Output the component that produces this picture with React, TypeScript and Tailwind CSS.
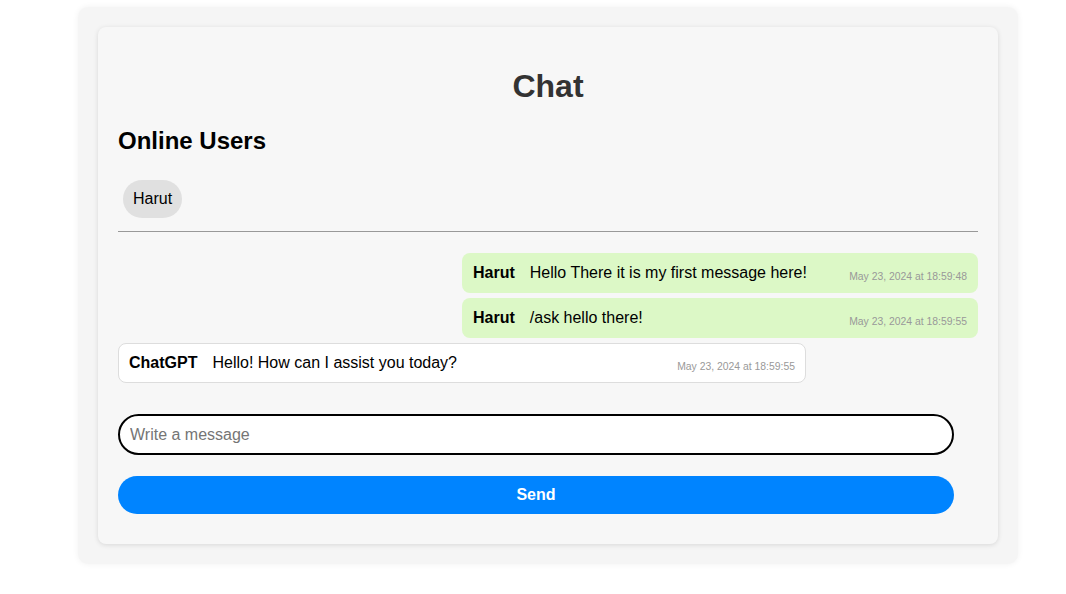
const messages = [
  { user: "Harut", text: "Hello There it is my first message here!", time: "May 23, 2024 at 18:59:48", mine: true },
  { user: "Harut", text: "/ask hello there!", time: "May 23, 2024 at 18:59:55", mine: true },
  { user: "ChatGPT", text: "Hello! How can I assist you today?", time: "May 23, 2024 at 18:59:55", mine: false },
];

function Message({ m }: { m: (typeof messages)[number] }) {
  return (
    <div
      className={
        m.mine
          ? "ml-auto flex w-[60%] items-end rounded-lg bg-[#dcf8c6] px-[11px] py-[10px]"
          : "mr-auto flex w-[80%] items-end rounded-lg border border-[#ddd] bg-white px-[10px] py-[9px]"
      }
    >
      <span className="text-[16px] leading-5 font-bold text-black">{m.user}</span>
      <span className="ml-[15px] text-[16px] leading-5 text-black">{m.text}</span>
      <span className="mb-[-2px] ml-auto pl-4 text-[10.4px] leading-4 text-[#999]">{m.time}</span>
    </div>
  );
}

export default function App() {
  return (
    <div className="min-h-[594px] bg-white font-['Liberation_Sans',Arial,sans-serif]">
      <div className="ml-[78px] w-[940px] pt-[7px]">
        <div className="rounded-[10px] bg-[#f5f5f5] p-5 shadow-[0_0_6px_rgba(0,0,0,0.06)]">
          <div className="rounded-lg bg-[#f7f7f7] px-5 pt-5 pb-[30px] shadow-[0_1px_5px_rgba(0,0,0,0.12)]">
            <h1 className="mt-[21px] mb-[22px] text-center text-[32px] leading-[37px] font-bold text-[#333]">
              Chat
            </h1>
            <h2 className="text-[24px] leading-7 font-bold text-black">Online Users</h2>
            <div className="mt-[20px] flex border-b border-[#999] pb-[8px]">
              <span className="m-[5px] rounded-full bg-[#e0e0e0] px-[10px] py-[9px] text-[16px] leading-5 text-black">
                Harut
              </span>
            </div>
            <div className="mt-[21px] flex flex-col gap-[5px]">
              {messages.map((m, i) => (
                <Message key={i} m={m} />
              ))}
            </div>
            <input
              className="mt-[31px] block h-[41px] w-[836px] rounded-full border-2 border-black bg-white px-[10px] text-[16px] text-black outline-none placeholder:text-[#757575]"
              placeholder="Write a message"
            />
            <button className="mt-[21px] block h-[38px] w-[836px] rounded-full bg-[#0084ff] text-[16px] font-bold text-white">
              Send
            </button>
          </div>
        </div>
      </div>
    </div>
  );
}
